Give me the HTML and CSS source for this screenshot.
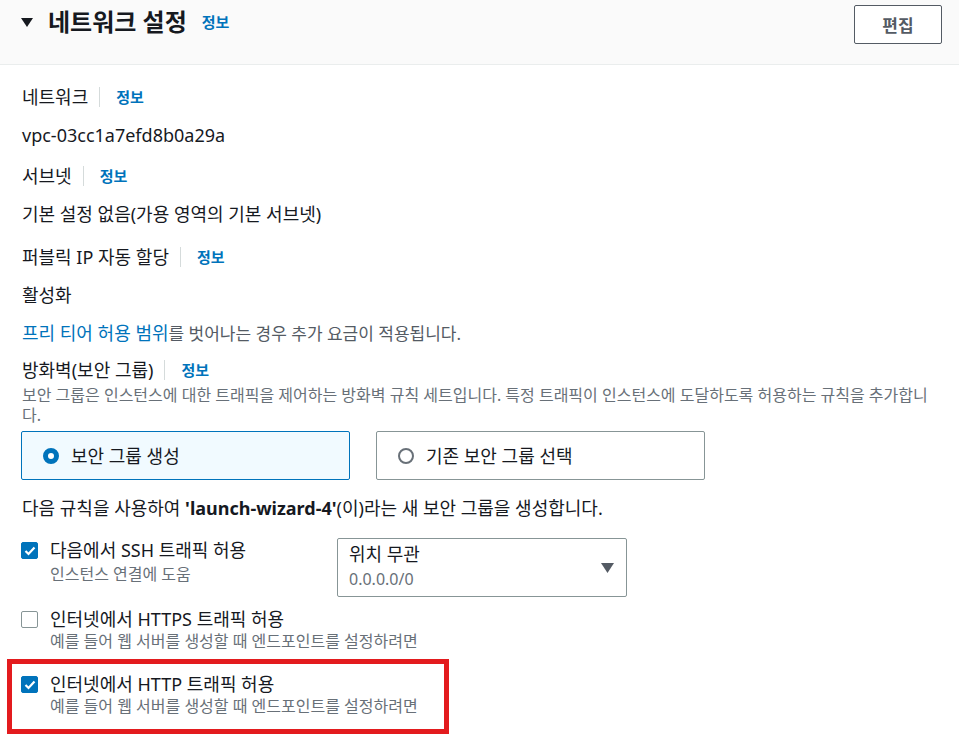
FILE: index.html
```html
<!DOCTYPE html>
<html lang="ko">
<head>
    <meta charset="UTF-8">
    <meta name="viewport" content="width=device-width, initial-scale=1.0">
    <title>네트워크 설정</title>
    <link rel="stylesheet" href="styles.css">
</head>
<body>
    <div class="panel">
        <div class="panel-header">
            <div class="panel-title">
                <svg class="caret" width="12" height="10" viewBox="0 0 12 10">
                    <polygon points="0,0 12,0 6,9" fill="#16191f"/>
                </svg>
                <h2>네트워크 설정</h2>
                <a class="info" href="#">정보</a>
            </div>
            <button type="button" class="btn">편집</button>
        </div>

        <div class="panel-body">
            <div class="field">
                <div class="label-row">
                    <span>네트워크</span>
                    <a class="info divided" href="#">정보</a>
                </div>
                <div class="value">vpc-03cc1a7efd8b0a29a</div>
            </div>

            <div class="field">
                <div class="label-row">
                    <span>서브넷</span>
                    <a class="info divided" href="#">정보</a>
                </div>
                <div class="value">기본 설정 없음(가용 영역의 기본 서브넷)</div>
            </div>

            <div class="field field-wide">
                <div class="label-row">
                    <span>퍼블릭 IP 자동 할당</span>
                    <a class="info divided" href="#">정보</a>
                </div>
                <div class="value">활성화</div>
                <div class="value"><a class="link" href="#">프리 티어 허용 범위</a><span class="note">를 벗어나는 경우 추가 요금이 적용됩니다.</span></div>
            </div>

            <div class="field field-tight">
                <div class="label-row">
                    <span>방화벽(보안 그룹)</span>
                    <a class="info divided" href="#">정보</a>
                </div>
                <p class="desc">보안 그룹은 인스턴스에 대한 트래픽을 제어하는 방화벽 규칙 세트입니다. 특정 트래픽이 인스턴스에 도달하도록 허용하는 규칙을 추가합니다.</p>

                <div class="tiles">
                    <label class="tile selected">
                        <span class="radio checked"></span>
                        보안 그룹 생성
                    </label>
                    <label class="tile">
                        <span class="radio"></span>
                        기존 보안 그룹 선택
                    </label>
                </div>

                <p class="summary">다음 규칙을 사용하여 <b>'launch-wizard-4'</b>(이)라는 새 보안 그룹을 생성합니다.</p>

                <div class="rule-row">
                    <div class="check-row ssh">
                        <span class="checkbox checked">
                            <svg width="12" height="10" viewBox="0 0 12 10"><polyline points="1.5,5 4.5,8 10.5,1.5" fill="none" stroke="#fff" stroke-width="2.2"/></svg>
                        </span>
                        <div>
                            <div class="check-label">다음에서 SSH 트래픽 허용</div>
                            <div class="check-desc">인스턴스 연결에 도움</div>
                        </div>
                    </div>
                    <div class="select">
                        <div>
                            <div class="select-value">위치 무관</div>
                            <div class="select-desc">0.0.0.0/0</div>
                        </div>
                        <svg width="13" height="10" viewBox="0 0 13 10"><polygon points="0,0 13,0 6.5,10" fill="#545b64"/></svg>
                    </div>
                </div>

                <div class="check-row https">
                    <span class="checkbox"></span>
                    <div>
                        <div class="check-label">인터넷에서 HTTPS 트래픽 허용</div>
                        <div class="check-desc">예를 들어 웹 서버를 생성할 때 엔드포인트를 설정하려면</div>
                    </div>
                </div>

                <div class="highlight">
                    <div class="check-row">
                        <span class="checkbox checked">
                            <svg width="12" height="10" viewBox="0 0 12 10"><polyline points="1.5,5 4.5,8 10.5,1.5" fill="none" stroke="#fff" stroke-width="2.2"/></svg>
                        </span>
                        <div>
                            <div class="check-label">인터넷에서 HTTP 트래픽 허용</div>
                            <div class="check-desc">예를 들어 웹 서버를 생성할 때 엔드포인트를 설정하려면</div>
                        </div>
                    </div>
                </div>
            </div>
        </div>
    </div>
</body>
</html>
```

FILE: styles.css
```css
body {
    font-family: "Noto Sans", "Noto Sans CJK KR", sans-serif;
    margin: 0;
    padding: 0;
    background-color: #fff;
    color: #16191f;
    font-size: 18px;
    line-height: 22px;
}

a {
    text-decoration: none;
}

.panel {
    width: 959px;
    height: 736px;
    overflow: hidden;
}

.panel-header {
    display: flex;
    justify-content: space-between;
    align-items: flex-start;
    height: 65px;
    box-sizing: border-box;
    padding: 5px 17px 0 21px;
    background-color: #fafafa;
    border-bottom: 1px solid #eaeded;
}

.panel-title {
    display: flex;
    align-items: center;
    height: 34px;
}

.caret {
    margin-right: 15px;
    margin-top: 2px;
}

h2 {
    margin: 0 15px 0 0;
    font-size: 24px;
    font-weight: 700;
    line-height: 34px;
}

.info {
    color: #0073bb;
    font-size: 15px;
    font-weight: 700;
    line-height: 20px;
}

.btn {
    width: 88px;
    height: 39px;
    background-color: #fff;
    color: #545b64;
    border: 1px solid #545b64;
    border-radius: 2px;
    font-family: inherit;
    font-size: 17px;
    font-weight: 700;
    cursor: pointer;
}

.panel-body {
    padding: 21px 22px 0 22px;
}

.field + .field {
    margin-top: 19px;
}

.field-wide {
    margin-top: 21px !important;
}

.field-tight {
    margin-top: 14px !important;
}

.label-row {
    display: flex;
    align-items: center;
    height: 22px;
}

.divided {
    margin-left: 11px;
    padding-left: 16px;
    border-left: 1px solid #d5dbdb;
}

.value {
    margin-top: 16px;
}

.link {
    color: #0073bb;
}

.note {
    color: #545b64;
    font-size: 17px;
}

.desc {
    margin: 4px 0 0 0;
    color: #687078;
    font-size: 16px;
    line-height: 20px;
}

.tiles {
    display: flex;
    gap: 26px;
    margin-top: 6px;
    margin-left: -1px;
}

.tile {
    display: flex;
    align-items: center;
    gap: 12px;
    width: 329px;
    height: 49px;
    box-sizing: border-box;
    padding-left: 21px;
    border: 1px solid #879596;
    border-radius: 2px;
    cursor: pointer;
}

.tile.selected {
    background-color: #f1faff;
    border-color: #0073bb;
}

.radio {
    width: 16px;
    height: 16px;
    box-sizing: border-box;
    border: 2px solid #687078;
    border-radius: 50%;
    background-color: #fff;
}

.radio.checked {
    border: 5px solid #0073bb;
}

.summary {
    margin: 17px 0 0 0;
}

.rule-row {
    display: flex;
    align-items: flex-start;
    margin-top: 19px;
}

.check-row {
    display: flex;
    align-items: flex-start;
    gap: 12px;
    margin-left: -1px;
}

.check-row.ssh {
    width: 316px;
    padding-top: 1px;
}

.check-row.https {
    margin-top: 11px;
}

.checkbox {
    display: flex;
    align-items: center;
    justify-content: center;
    flex-shrink: 0;
    width: 17px;
    height: 17px;
    box-sizing: border-box;
    margin-top: 3px;
    border: 1px solid #879596;
    border-radius: 2px;
    background-color: #fff;
}

.checkbox.checked {
    background-color: #0073bb;
    border-color: #0073bb;
}

.check-desc {
    color: #687078;
    font-size: 16px;
    line-height: 20px;
    margin-top: 1px;
}

.ssh .check-desc {
    margin-top: 3px;
}

.select {
    display: flex;
    justify-content: space-between;
    align-items: center;
    width: 290px;
    height: 59px;
    box-sizing: border-box;
    padding: 0 12px 0 11px;
    border: 1px solid #879596;
    border-radius: 2px;
}

.select-value {
    line-height: 22px;
    margin-top: -3px;
}

.select-desc {
    color: #687078;
    font-size: 16px;
    line-height: 20px;
    margin-top: 4px;
}

.highlight {
    margin: 8px 0 0 -15px;
    width: 442px;
    box-sizing: border-box;
    padding: 9px 0 13px 10px;
    border: 5px solid #e31b1e;
}
```
